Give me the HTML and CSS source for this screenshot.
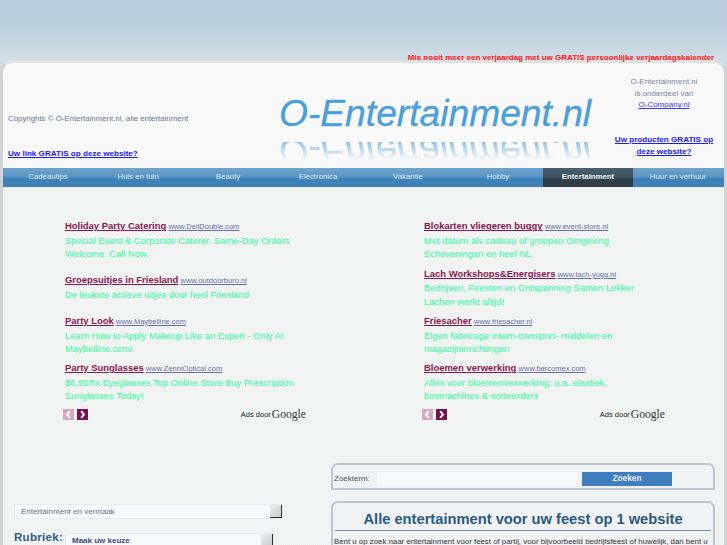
FILE: index.html
```html
<!DOCTYPE html>
<html lang="nl">
<head>
<meta charset="utf-8">
<title>O-Entertainment.nl</title>
<link rel="stylesheet" href="styles.css">
</head>
<body>
<div class="sky">
  <a class="promo">Mis nooit meer een verjaardag met uw GRATIS persoonlijke verjaardagskalender</a>
</div>
<div class="page">
  <header class="header">
    <div class="head-left">
      <p class="copy">Copyrights © O-Entertainment.nl, alle entertainment</p>
      <a class="strong-link">Uw link GRATIS op deze website?</a>
    </div>
    <div class="logo">
      <div class="logo-text">O-Entertainment.nl</div>
      <div class="logo-mirror" aria-hidden="true"><span class="logo-text">O-Entertainment.nl</span></div>
    </div>
    <div class="head-right">
      <p class="company">O-Entertainment.nl<br>is onderdeel van<br><a class="company-link">O-Company.nl</a></p>
      <a class="strong-link right-link">Uw producten GRATIS op deze website?</a>
    </div>
  </header>
  <nav class="nav">
    <a class="nav-item">Cadeautips</a>
    <a class="nav-item">Huis en tuin</a>
    <a class="nav-item">Beauty</a>
    <a class="nav-item">Electronica</a>
    <a class="nav-item">Vakantie</a>
    <a class="nav-item">Hobby</a>
    <a class="nav-item active">Entertainment</a>
    <a class="nav-item">Huur en verhuur</a>
  </nav>
  <main class="content">
    <section class="ads">
      <div class="ad-col">
        <div class="ad roomy"><a class="ad-title">Holiday Party Catering</a> <a class="ad-url">www.DeliDouble.com</a><p class="ad-text">Special Event &amp; Corporate Caterer. Same-Day Orders Welcome. Call Now.</p></div>
        <div class="ad roomy"><a class="ad-title">Groepsuitjes in Friesland</a> <a class="ad-url">www.outdoorburo.nl</a><p class="ad-text">De leukste actieve uitjes door heel Friesland</p></div>
        <div class="ad"><a class="ad-title">Party Look</a> <a class="ad-url">www.Maybelline.com</a><p class="ad-text">Learn How to Apply Makeup Like an Expert - Only At Maybelline.com!</p></div>
        <div class="ad"><a class="ad-title">Party Sunglasses</a> <a class="ad-url">www.ZenniOptical.com</a><p class="ad-text">$6.95Rx Eyeglasses Top Online Store Buy Prescription Sunglasses Today!</p></div>
        <div class="ad-foot">
          <span class="pager off"><svg viewBox="0 0 11 11" width="11" height="11"><path d="M6.8 2.2 4 5.5l2.8 3.3" class="chev"/></svg></span>
          <span class="pager"><svg viewBox="0 0 11 11" width="11" height="11"><path d="M4.2 2.2 7 5.5 4.2 8.8" class="chev"/></svg></span>
          <span class="ads-by">Ads door <span class="google">Google</span></span>
        </div>
      </div>
      <div class="ad-col">
        <div class="ad"><a class="ad-title">Blokarten vliegeren buggy</a> <a class="ad-url">www.event-store.nl</a><p class="ad-text">Met datum als cadeau of groepen Omgeving Scheveningen en heel NL</p></div>
        <div class="ad"><a class="ad-title">Lach Workshops&amp;Energisers</a> <a class="ad-url">www.lach-yoga.nl</a><p class="ad-text">Bedrijven, Feesten en Ontspanning Samen Lekker Lachen werkt altijd!</p></div>
        <div class="ad"><a class="ad-title">Friesacher</a> <a class="ad-url">www.friesacher.nl</a><p class="ad-text">Eigen fabricage intern-transport- middelen en magazijninrichtingen</p></div>
        <div class="ad"><a class="ad-title">Bloemen verwerking</a> <a class="ad-url">www.bercomex.com</a><p class="ad-text">Alles voor bloemenverwerking: o.a. elastiek, bosmachines &amp; sorteerders</p></div>
        <div class="ad-foot">
          <span class="pager off"><svg viewBox="0 0 11 11" width="11" height="11"><path d="M6.8 2.2 4 5.5l2.8 3.3" class="chev"/></svg></span>
          <span class="pager"><svg viewBox="0 0 11 11" width="11" height="11"><path d="M4.2 2.2 7 5.5 4.2 8.8" class="chev"/></svg></span>
          <span class="ads-by">Ads door <span class="google">Google</span></span>
        </div>
      </div>
    </section>
    <section class="lower">
      <div class="filters">
        <div class="select wide"><span>Entertainment en vermaak</span><i class="select-btn"></i></div>
        <div class="rubriek">
          <label class="rubriek-label">Rubriek:</label>
          <div class="select narrow"><b>Maak uw keuze</b><i class="select-btn"></i></div>
        </div>
      </div>
      <div class="right-col">
        <form class="search">
          <span class="search-label">Zoekterm:</span>
          <span class="search-input"></span>
          <span class="search-btn">Zoeken</span>
        </form>
        <article class="intro">
          <h1 class="intro-title">Alle entertainment voor uw feest op 1 website</h1>
          <p class="intro-text">Bent u op zoek naar entertainment voor feest of partij, voor bijvoorbeeld bedrijfsfeest of huwelijk, dan bent u</p>
        </article>
      </div>
    </section>
  </main>
</div>
</body>
</html>
```
FILE: styles.css
```css
* { box-sizing: border-box; }
html, body { margin: 0; height: 545px; overflow: hidden; }
body {
  font-family: "Liberation Sans", Arial, sans-serif;
  font-size: 8px;
  background:
    repeating-conic-gradient(rgba(255,255,255,.05) 0 25%, transparent 0 50%) 0 0 / 2px 2px,
    linear-gradient(#b9cddd 0, #bccfdd 30px, #cfdde7 62px);
  color: #6a6f95;
}
p { margin: 0; }
.sky {
  height: 60px;
  display: flex;
  justify-content: flex-end;
  align-items: flex-start;
  padding: 52px 13px 0 0;
  position: relative;
  z-index: 2;
}
.promo { color: #ff1414; font-weight: bold; font-size: 8px; line-height: 11px; white-space: nowrap; }
.page {
  height: 485px;
  background: repeating-conic-gradient(#eff1f1 0 25%, #f4f5f5 0 50%) 0 0 / 2px 2px;
  border: 3px solid #d2d3d3;
  border-top-color: #e4e0e0;
  border-bottom: 0;
  border-radius: 13px 13px 0 0;
  overflow: hidden;
}
.header {
  height: 105px;
  background: #f9f9f9;
  display: grid;
  grid-template-columns: 276px 330px 1fr;
}
.head-left { padding: 50px 0 0 5px; display: flex; flex-direction: column; }
.copy { line-height: 12px; color: #6d7299; font-size: 7.85px; }
.strong-link { color: #1a1aff; font-weight: bold; text-decoration: underline; font-size: 8.1px; line-height: 12px; }
.head-left .strong-link { margin-top: 23px; }
.logo { padding-top: 30px; }
.logo-text {
  font-style: italic;
  font-size: 37.2px;
  line-height: 40px;
  color: #4a9edb;
  -webkit-text-stroke: .3px #4a9edb;
  white-space: nowrap;
  display: block;
}
.logo-mirror {
  height: 20px;
  margin-top: 9px;
  overflow: hidden;
  -webkit-mask-image: linear-gradient(#000 0, transparent 90%);
  mask-image: linear-gradient(#000 0, transparent 90%);
  opacity: .6;
}
.logo-mirror .logo-text { transform: scaleY(-1); line-height: 20px; }
.head-right { text-align: center; padding: 13px 9px 0 4px; display: flex; flex-direction: column; }
.company { line-height: 11.7px; color: #80849f; }
.company-link { color: #3a3aff; text-decoration: underline; }
.right-link { margin-top: 23px; line-height: 11.7px; }
.nav {
  display: flex;
  height: 19px;
  background: linear-gradient(#6ea4cc 0, #5a96c5 45%, #3f82ba 55%, #3f80b8 100%);
}
.nav-item {
  flex: 0 0 90px;
  text-align: center;
  color: #dfe8ef;
  line-height: 17px;
  font-size: 7.8px;
}
.nav-item.active {
  background: linear-gradient(#4b6070 0, #3e5361 45%, #2f3f4b 55%, #2f3e49 100%);
  color: #f2f4f5;
  font-weight: bold;
}
.ads {
  display: grid;
  grid-template-columns: 359px 240px;
  padding: 32.4px 0 0 62px;
  height: 276px;
}
.ad-col { display: flex; flex-direction: column; width: 241px; }
.ad { margin-bottom: 6px; }
.ad.roomy { margin-bottom: 12.6px; }
.ad-title { color: #8a1550; font-weight: bold; font-size: 9.45px; line-height: 14px; text-decoration: underline; }
.ad-url { color: #6670a8; font-size: 7.5px; line-height: 14px; text-decoration: underline; }
.ad-text { color: #2bff96; font-size: 9.4px; line-height: 13.33px; margin-top: -.33px; max-width: 237px; }
.ad-foot { display: flex; align-items: center; gap: 3px; margin-left: -2px; height: 11px; }
.pager { width: 11px; height: 11px; background: #7d0e4c; display: block; }
.pager svg { display: block; }
.pager.off { background: #d6a9c2; }
.chev { fill: none; stroke: #fff; stroke-width: 2; }
.ads-by { margin-left: auto; color: #222; font-size: 7.5px; display: flex; align-items: center; gap: 1px; white-space: nowrap; }
.google { font-family: "Liberation Serif", serif; font-size: 11.6px; color: #333; line-height: 11px; }
.lower { display: grid; grid-template-columns: 328px 384px; }
.filters { padding: 41px 0 0 11px; }
.select {
  display: flex;
  align-items: center;
  justify-content: space-between;
  height: 15px;
  background: #f7f9fb;
  border: 1px solid #e3ebf3;
  color: #6a7099;
  padding-left: 6px;
}
.select.wide { width: 269px; }
.select.narrow { flex: 0 0 209px; color: #3f4a8c; margin-top: 2px; }
.select b { font-weight: bold; }
.select-btn {
  width: 12px;
  height: 13px;
  background: linear-gradient(135deg, #eee, #c8cccc);
  border-right: 1px solid #333;
  border-bottom: 1px solid #333;
  align-self: flex-start;
}
.rubriek { display: flex; align-items: flex-start; gap: 3px; margin-top: 12px; }
.rubriek-label { flex: none; color: #2e5d82; font-weight: bold; font-size: 11.5px; line-height: 13px; letter-spacing: .3px; width: 48px; white-space: nowrap; }
.search {
  height: 27px;
  border: 2px solid #bcc6cc;
  border-radius: 7px 7px 0 0;
  display: flex;
  align-items: center;
  padding: 4px 0 0 1px;
  background: #f0f2f3;
}
.search-label { color: #555; width: 43px; }
.search-input { width: 200px; height: 14px; background: #f7f9fa; }
.search-btn {
  width: 90px;
  height: 14px;
  margin-left: 5px;
  background: #3f7fbf;
  color: #eef;
  font-weight: bold;
  font-size: 8.3px;
  text-align: center;
  line-height: 13px;
}
.intro {
  margin-top: 11px;
  height: 60px;
  border: 2px solid #bcc6cc;
  border-bottom: 0;
  border-radius: 7px 7px 0 0;
  padding: 0 2px;
  background: #f0f2f3;
}
.intro-title {
  margin: 0;
  padding-top: 7px;
  height: 28px;
  font-size: 14.7px;
  line-height: 19px;
  text-align: center;
  color: #2a5a80;
  border-bottom: 1px solid #6a93b3;
}
.intro-text { color: #333; font-size: 7.85px; line-height: 12px; padding-top: 5px; margin-left: -1px; white-space: nowrap; overflow: hidden; }
```
